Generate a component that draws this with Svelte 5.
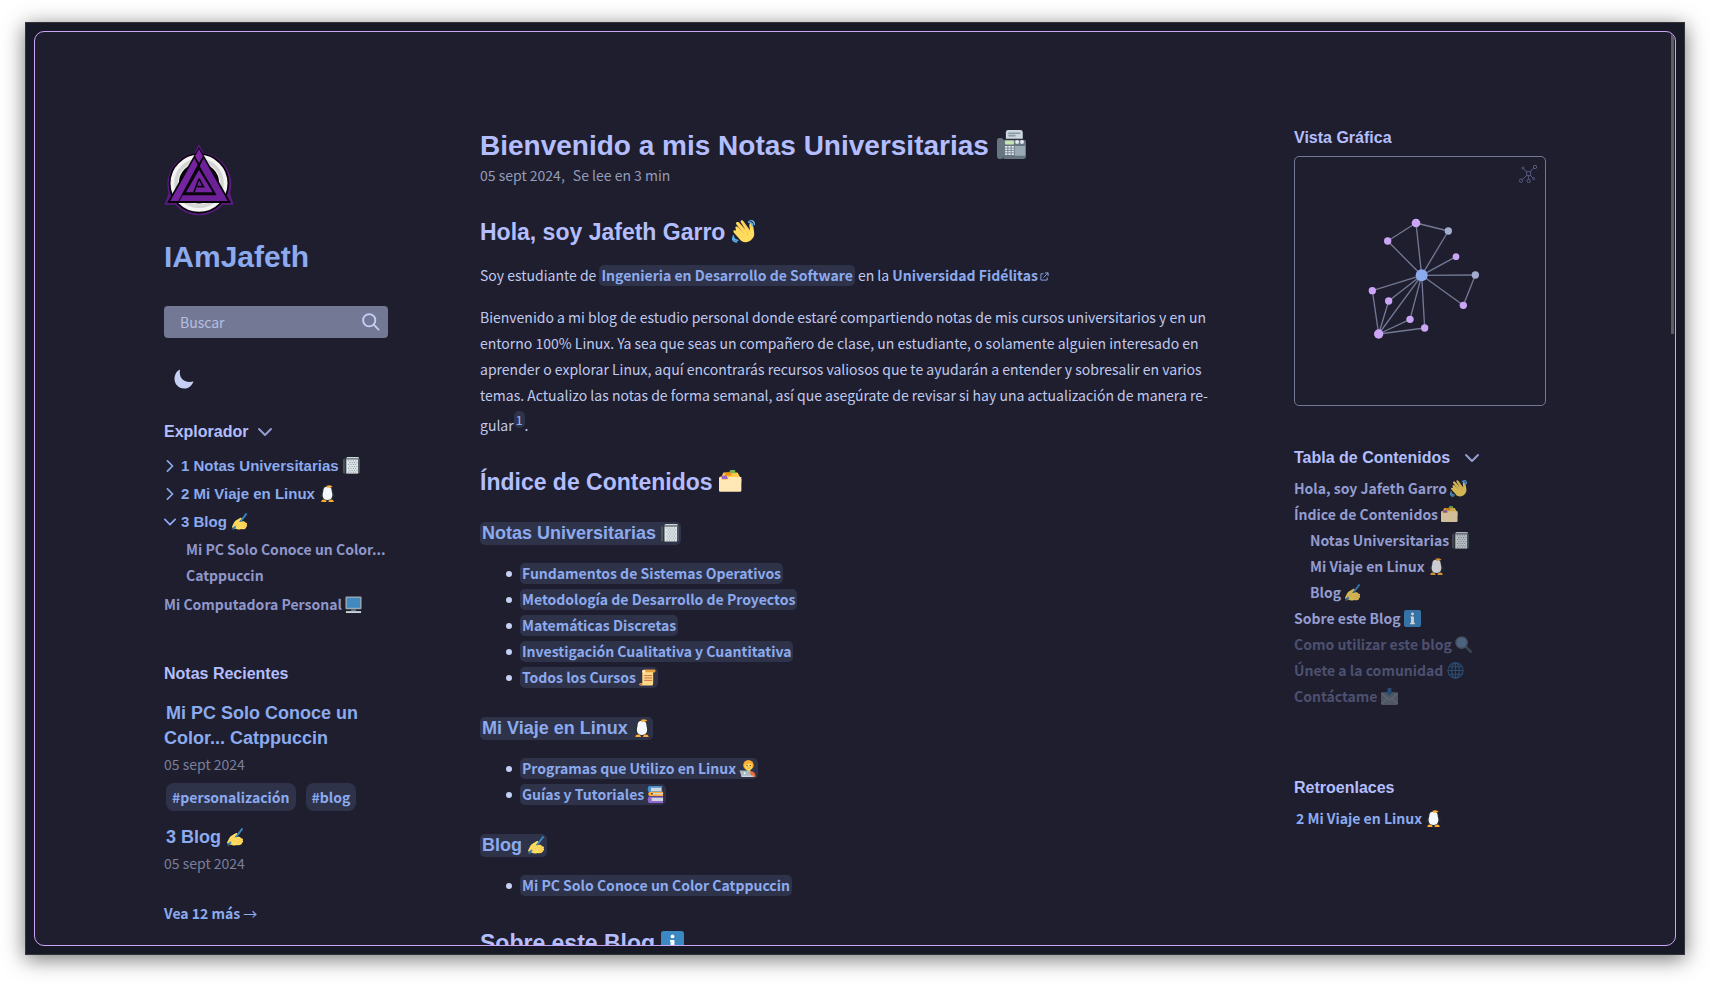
<script>
  const courses = [
    { text: 'Fundamentos de Sistemas Operativos' },
    { text: 'Metodología de Desarrollo de Proyectos' },
    { text: 'Matemáticas Discretas' },
    { text: 'Investigación Cualitativa y Cuantitativa' },
    { text: 'Todos los Cursos', icon: 'scroll' }
  ];
  const linux = [
    { text: 'Programas que Utilizo en Linux', icon: 'coder' },
    { text: 'Guías y Tutoriales', icon: 'books' }
  ];
  const toc = [
    { text: 'Hola, soy Jafeth Garro', icon: 'wave' },
    { text: 'Índice de Contenidos', icon: 'dividers' },
    { text: 'Notas Universitarias', icon: 'notebook', sub: true },
    { text: 'Mi Viaje en Linux', icon: 'penguin', sub: true },
    { text: 'Blog', icon: 'writing', sub: true },
    { text: 'Sobre este Blog', icon: 'info' },
    { text: 'Como utilizar este blog', icon: 'lens', dim: true },
    { text: 'Únete a la comunidad', icon: 'globe', dim: true },
    { text: 'Contáctame', icon: 'mail', dim: true }
  ];
  const hub = { x: 424, y: 497 };
  const nodes = [
    { x: 407, y: 340, r: 13 },
    { x: 322, y: 394, r: 11 },
    { x: 504, y: 364, r: 11, grey: true },
    { x: 527, y: 441, r: 10 },
    { x: 585, y: 496, r: 11, grey: true },
    { x: 549, y: 587, r: 11 },
    { x: 276, y: 543, r: 11 },
    { x: 325, y: 574, r: 11 },
    { x: 389, y: 629, r: 11 },
    { x: 433, y: 655, r: 11 },
    { x: 295, y: 673, r: 14 }
  ];
  const links = [[0, 1], [0, 2], [4, 5], [6, 10], [7, 10], [8, 10], [9, 10]];
  const keys = [0, 1, 2, 3];
  const dots = Array.from({ length: 28 }, (_, i) => {
    const row = Math.floor(i / 4);
    return { x: 12 + (i % 4) * 5 + (row % 2) * 2.5, y: 8 + row * 4 };
  });
</script>

{#snippet chevron(dir)}
  <svg class="chevron {dir}" viewBox="0 0 14 8" aria-hidden="true"><path d="M1 1l6 6 6-6" /></svg>
{/snippet}

{#snippet emoji(name)}
  <svg class="emoji" viewBox="0 0 36 36" aria-hidden="true">
    {#if name === 'fax'}
      <path fill="#66757f" d="M3 10h2a3 3 0 0 1 3 3v20a3 3 0 0 1-3 3H3a3 3 0 0 1-3-3V13a3 3 0 0 1 3-3zM8 12h25a3 3 0 0 1 3 3v18a3 3 0 0 1-3 3H8z" />
      <path fill="#ccd6dd" d="M14 0h15a3 3 0 0 1 3 3v8H11V3a3 3 0 0 1 3-3z" />
      <path fill="none" stroke="#8899a6" stroke-width="2" d="M14 4h15M14 7h9" />
      <rect fill="#c6e5b3" x="10" y="13" width="11" height="5" rx="1" />
      <circle fill="#e1e8ed" cx="25" cy="15" r="2.500" /><circle fill="#e1e8ed" cx="31" cy="15" r="2.500" />
      <path fill="#9aaab4" d="M22 20h13v12H22z" />
      {#each keys as k}<path stroke="#e1e8ed" stroke-width="2" stroke-dasharray="3 1" d="M10 {21 + k * 3}h11" />{/each}
    {:else if name === 'wave'}
      <path fill="#ffdc5d" d="M6 14c-2-2 0-5 3-3l7 7-9-11c-2-3 1-5 4-3l10 11-7-11c-2-3 2-5 4-2l10 14c0-5-2-8 0-11 2-3 5 0 5 3 1 10 4 15-1 21-6 8-16 7-20 1L3 20c-2-3 0-5 3-3z" />
      <path fill="none" stroke="#f5b54f" stroke-width="1" d="M9 11l10 10M11 5l11 13M18 4l8 11M28 16c-4 2-5 5-3 9" />
      <path fill="none" stroke="#5dadec" stroke-width="2.500" d="M25 3c4 0 7 3 7 7M27 0c5 0 9 4 8 8M2 24c0 5 3 8 8 8M0 27c1 5 4 8 8 7" />
    {:else if name === 'dividers'}
      <path fill="#ffcc4d" d="M4 10l3-6h22l4 7v8H3z" />
      <path fill="#77b255" d="M16 3l2-3h7l1 5h-9z" />
      <path fill="#f4900c" d="M9 6l2-2h8l1 5H9z" />
      <path fill="#ffac33" d="M2 10h10l3 4h20v6H2z" />
      <path fill="#9266cc" d="M4 9h8l2 5H4z" />
      <path fill="#ffe8b6" d="M1 11h3v4h9l3-4h19v21a2 2 0 0 1-2 2H2a2 2 0 0 1-2-2V12z" />
    {:else if name === 'notebook'}
      <rect fill="#31373d" x="1" y="2" width="34" height="34" rx="3" />
      <path fill="#ccd6dd" d="M9 0h22a3 3 0 0 1 3 3H6z" />
      <rect fill="#dfe7ea" x="7" y="5" width="25" height="30" />
      {#each dots as d}<circle fill="#7c8b94" cx={d.x} cy={d.y} r="1.200" />{/each}
      <path stroke="#66757f" stroke-width="2" d="M2 5v29M34 4v30" />
    {:else if name === 'penguin'}
      <path fill="#292f33" d="M18 1c9 0 10 7 12 15l4 9c-1 2-3 0-4-1-1 6-4 10-12 10S7 31 6 24c-1 1-3 3-4 1l4-9C8 8 9 1 18 1z" />
      <path fill="#f5f8fa" d="M18 5c6-3 9 2 9 9 3 9 1 18-9 18S6 23 9 14c0-7 3-12 9-9z" />
      <path fill="#ffac33" d="M15 2q10-4 14 2l-10 2zM5 35c0-4 6-6 10-2l1 3H5zM31 35c0-4-6-6-10-2l-1 3h11z" />
    {:else if name === 'writing'}
      <path fill="#ffdc5d" d="M2 29c3-5 4-10 8-13l10-6c3-1 4 2 2 4l-5 5c6-2 12-2 14 2 3-1 4 2 2 4 2 1 1 4-1 5 1 3-6 6-11 4-4 2-8 1-12-1l-4 2z" />
      <path fill="none" stroke="#f5b54f" stroke-width="1" d="M17 19l-5 4M31 21l-10 3M33 25l-11 3M32 29l-9 3M10 28c3-4 8-4 9 0" />
      <path stroke="#3b88c3" stroke-width="4" d="M33 1L20 18M10 28l-5 5" />
      <path fill="#226699" d="M6 30l-5 6 7-3z" />
    {:else if name === 'monitor'}
      <rect fill="#99aab5" x="1" y="1" width="34" height="27" rx="2" />
      <path fill="#4289c1" d="M4 4h28v21H4z" />
      <path fill="#66757f" d="M13 28h10v4H13z" />
      <path fill="#ccd6dd" d="M2 32h32v4H2z" />
    {:else if name === 'scroll'}
      <path fill="#ffd983" d="M9 2h24v5h-3v23c0 3-1 5-4 5H3c-3 0-3-5 0-5h4V6z" />
      <path fill="#e39f3d" d="M10 1h22a3 3 0 0 1 0 6H12z" />
      <circle fill="#ffe8b6" cx="10" cy="5" r="3.500" /><circle fill="#c1694f" cx="4" cy="33" r="2.500" />
      <path stroke="#c1694f" stroke-width="2" d="M11 14h17M11 19h17M11 24h17" />
    {:else if name === 'coder'}
      <path fill="#ef6c3a" d="M17 26c9-5 18-1 18 10H15z" />
      <circle fill="#ffac33" cx="20" cy="11" r="11" />
      <path fill="#ffdc5d" d="M12 10c5 0 9-2 11-4 1 3 4 3 5 5 0 7-4 11-8 11s-8-5-8-12zM17 20h7v7h-7z" />
      <circle fill="#662113" cx="17" cy="12" r="1.300" /><circle fill="#662113" cx="24" cy="12" r="1.300" />
      <path stroke="#c1694f" stroke-width="1.500" d="M18 17h5" />
      <path fill="#aab8c2" d="M1 22h21l4 12H5z" /><path fill="#ccd6dd" d="M5 33h25v3H5z" />
      <circle fill="#f5f8fa" cx="12" cy="28" r="2" />
    {:else if name === 'books'}
      <path fill="#3b94d9" d="M4 0h28v3H8v7h24v3H4q-5-6 0-13z" />
      <path fill="#ccd6dd" d="M8 3h23v8H8zM12 14h22v6H12zM9 24h25v9H9z" />
      <path fill="#ffac33" d="M5 12h29v3H9v3h25v3H5q-5-4 0-9z" />
      <path fill="#9266cc" d="M4 22h30v3H9v7h25v4H4q-5-7 0-14z" />
    {:else if name === 'info'}
      <rect fill="#3b88c3" width="36" height="36" rx="4" />
      <path fill="#fff" d="M14 14h7v13h2v3H13v-3h2V17h-1z" /><circle fill="#fff" cx="18" cy="8.500" r="3" />
    {:else if name === 'lens'}
      <path stroke="#66757f" stroke-width="6" stroke-linecap="round" d="M24 24l9 9" />
      <circle fill="#8ccaf7" stroke="#8899a6" stroke-width="3" cx="14" cy="14" r="12" />
    {:else if name === 'globe'}
      <g fill="none" stroke="#3b94d9" stroke-width="2.500"><circle cx="18" cy="18" r="16" /><ellipse cx="18" cy="18" rx="8" ry="16" /><path d="M18 2v32M2 18h32M5 10h26M5 26h26" /></g>
    {:else}
      <rect fill="#99aab5" y="9" width="36" height="27" rx="3" />
      <path fill="none" stroke="#e1e8ed" stroke-width="2" d="M1 34l12-12M35 34L23 22M1 11l17 15 17-15" />
      <path fill="#3b94d9" d="M14 0h8v8h5l-9 9-9-9h5z" />
    {/if}
  </svg>
{/snippet}

<div class="window">
  <div class="page" lang="es">
    <div class="columns">
      <aside class="side-left">
        <svg class="logo" viewBox="0 0 210 216" aria-hidden="true">
          <path d="M105 1L119 27A95 95 0 0 1 198 148L209 182H176A95 95 0 0 1 34 182H1L14 148A95 95 0 0 1 91 27Z" fill="#5b1a80" />
          <circle cx="105" cy="118" r="91" fill="#08050b" />
          <circle cx="105" cy="118" r="73" fill="none" stroke="#f4f4f4" stroke-width="25" />
          <circle cx="105" cy="118" r="69" fill="none" stroke="#d5d5d5" stroke-width="11" />
          <path d="M105 9L201 177H9Z" fill="#08050b" />
          <path d="M105 15L117 37L105 57L93 37Z" fill="#7b27a3" />
          <path d="M91 43L101 62L43 171H19Z" fill="#7424a0" />
          <path d="M119 43L191 171H46L56 154H158L107 67Z" fill="#6d2198" />
          <path d="M105 78L146 145H66Z" fill="#7424a0" />
          <path d="M105 104L90 145M105 104L118 128H100" fill="none" stroke="#08050b" stroke-width="5" />
        </svg>
        <a class="site" href="#inicio">IAmJafeth</a>
        <label class="search">
          <input type="search" placeholder="Buscar" aria-label="Buscar" />
          <svg viewBox="0 0 20 20" aria-hidden="true"><circle cx="8" cy="8" r="6.8" /><path d="M13 13l6 6" /></svg>
        </label>
        <button class="moon" aria-label="Modo oscuro">
          <svg viewBox="0 0 20 20"><path d="M6 0.5C4.500 9 10 14.500 19.500 12.500C17.500 18 13.500 19.600 10 19.500C4.500 19.300 0.500 15 0.500 10C0.500 6 2.500 2 6 0.500Z" /></svg>
        </button>
        <button class="head">Explorador {@render chevron('down')}</button>
        <nav class="explorer" aria-label="Explorador">
          <a class="folder" href="#notas">{@render chevron('closed')}<span>1 Notas Universitarias {@render emoji('notebook')}</span></a>
          <a class="folder" href="#linux">{@render chevron('closed')}<span>2 Mi Viaje en Linux {@render emoji('penguin')}</span></a>
          <a class="folder" href="#blog">{@render chevron('down')}<span>3 Blog {@render emoji('writing')}</span></a>
          <a class="file nested" href="#pc">Mi PC Solo Conoce un Color... Catppuccin</a>
          <a class="file" href="#mi-pc">Mi Computadora Personal {@render emoji('monitor')}</a>
        </nav>
        <section class="recent">
          <h3 class="label">Notas Recientes</h3>
          <h3 class="note"><a href="#pc">Mi PC Solo Conoce un Color... Catppuccin</a></h3>
          <p class="date">05 sept 2024</p>
          <div class="tags"><a href="#personalizacion">#personalización</a><a href="#tag-blog">#blog</a></div>
          <h3 class="note"><a href="#blog">3 Blog {@render emoji('writing')}</a></h3>
          <p class="date">05 sept 2024</p>
          <a class="more" href="#mas">Vea 12 más <span class="arrow">→</span></a>
        </section>
      </aside>

      <article>
        <h1>Bienvenido a mis Notas Universitarias {@render emoji('fax')}</h1>
        <p class="meta"><span>05 sept 2024,</span><span>Se lee en 3 min</span></p>
        <h2>Hola, soy Jafeth Garro {@render emoji('wave')}</h2>
        <p>
          Soy estudiante de <a class="chip" href="#ingenieria">Ingenieria en Desarrollo de Software</a> en la
          <a class="external" href="#fidelitas">Universidad Fidélitas<svg viewBox="0 0 10 10" aria-hidden="true"><path d="M4 2H1v7h7V6M5.500 1H9v3.500M9 1L4 6" /></svg></a>
        </p>
        <p>
          Bienvenido a mi blog de estudio personal donde estaré compartiendo notas de mis cursos
          universitarios y en un entorno 100% Linux. Ya sea que seas un compañero de clase, un estudiante,
          o solamente alguien interesado en aprender o explorar Linux, aquí encontrarás recursos valiosos
          que te ayudarán a entender y sobresalir en varios temas. Actualizo las notas de forma semanal,
          así que asegúrate de revisar si hay una actualización de manera re&shy;gular<sup><a href="#nota-1">1</a></sup>.
        </p>
        <h2>Índice de Contenidos {@render emoji('dividers')}</h2>
        <h3><a class="chip" href="#notas">Notas Universitarias {@render emoji('notebook')}</a></h3>
        <ul>
          {#each courses as item}
            <li><a class="chip" href="#curso">{item.text}{#if item.icon}{' '}{@render emoji(item.icon)}{/if}</a></li>
          {/each}
        </ul>
        <h3><a class="chip" href="#linux">Mi Viaje en Linux {@render emoji('penguin')}</a></h3>
        <ul>
          {#each linux as item}
            <li><a class="chip" href="#guia">{item.text}{' '}{@render emoji(item.icon)}</a></li>
          {/each}
        </ul>
        <h3><a class="chip" href="#blog">Blog {@render emoji('writing')}</a></h3>
        <ul>
          <li><a class="chip" href="#pc">Mi PC Solo Conoce un Color Catppuccin</a></li>
        </ul>
        <h2>Sobre este Blog {@render emoji('info')}</h2>
      </article>

      <aside class="side-right">
        <h3 class="label">Vista Gráfica</h3>
        <div class="graph">
          <svg viewBox="44 142 750 744" aria-label="Grafo de notas" role="img">
            <g class="edges">
              {#each nodes as n}<line x1={hub.x} y1={hub.y} x2={n.x} y2={n.y} />{/each}
              {#each links as [a, b]}<line x1={nodes[a].x} y1={nodes[a].y} x2={nodes[b].x} y2={nodes[b].y} />{/each}
            </g>
            {#each nodes as n}<circle class="node" class:grey={n.grey} cx={n.x} cy={n.y} r={n.r} />{/each}
            <circle class="hub" cx={hub.x} cy={hub.y} r="18" />
          </svg>
          <button aria-label="Grafo global">
            <svg viewBox="0 0 54 54"><path d="M23 20h12v12H23zM34 20l10-11M24 21L14 12M24 31L9 44M29 32v11M34 31l8 8" /><circle cx="48" cy="6" r="5" /><circle cx="12" cy="9" r="3" /><circle cx="6" cy="47" r="5" /><circle cx="29" cy="48" r="5" /><circle cx="44" cy="41" r="3" /></svg>
          </button>
        </div>
        <button class="head wide">Tabla de Contenidos {@render chevron('down')}</button>
        <nav class="toc" aria-label="Tabla de Contenidos">
          {#each toc as t}
            <a class:sub={t.sub} class:dim={t.dim} href="#seccion">{t.text}{' '}{@render emoji(t.icon)}</a>
          {/each}
        </nav>
        <section class="backlinks">
          <h3 class="label">Retroenlaces</h3>
          <a href="#linux">2 Mi Viaje en Linux {@render emoji('penguin')}</a>
        </section>
      </aside>
    </div>
    <div class="thumb"></div>
  </div>
</div>

<style>
  :global(body) {
    background: #fff;
  }
  :global(#app) {
    display: flow-root;
  }
  .window {
    --body: "Noto Sans CJK SC", "Noto Sans", sans-serif;
    --head: "Liberation Sans", Arial, sans-serif;
    box-sizing: border-box;
    height: calc(100vh - 51px);
    margin: 22px 25px 29px;
    padding: 8px;
    border: 1px solid #333338;
    background: #181926;
    box-shadow: 0 4px 20px rgba(0, 0, 0, 0.55);
    font: 14px/26px var(--body);
    color: #c0c9ee;
  }
  .page {
    position: relative;
    box-sizing: border-box;
    height: 100%;
    overflow: hidden;
    border: 1px solid #cba6f7;
    border-radius: 10px;
    background: #1e1e2e;
  }
  .thumb {
    position: absolute;
    top: 2px;
    right: 1px;
    width: 3px;
    height: 300px;
    background: #5e5e62;
  }
  .columns {
    display: grid;
    grid-template-columns: 224px minmax(0, 1fr) 252px;
    gap: 64px;
    max-width: 1382px;
    margin: 0 auto;
  }
  h1, h2, h3, p, ul {
    margin: 0;
  }
  h1, h2, h3, .head, .site, .folder {
    font-family: var(--head);
    font-weight: 700;
    color: #b4befe;
  }
  a {
    color: #8caaee;
    text-decoration: none;
    font-weight: 700;
  }
  button {
    border: 0;
    padding: 0;
    background: none;
    cursor: pointer;
  }
  svg {
    display: block;
  }
  .emoji {
    display: inline-block;
    width: 17px;
    height: 17px;
    vertical-align: -3px;
  }
  h1 .emoji {
    width: 29px;
    height: 29px;
    vertical-align: -4px;
  }
  h2 .emoji {
    width: 23px;
    height: 23px;
    vertical-align: -3px;
  }
  h3 .emoji {
    width: 18px;
    height: 18px;
  }
  .side-left {
    display: flex;
    flex-direction: column;
    align-items: stretch;
    padding-top: 112px;
  }
  .logo {
    width: 70px;
    height: 72px;
  }
  .site {
    margin-top: 22px;
    font-size: 30px;
    line-height: 38px;
    color: #8caaee;
  }
  .search {
    display: flex;
    align-items: center;
    box-sizing: border-box;
    height: 32px;
    margin-top: 30px;
    padding: 0 8px 0 16px;
    border-radius: 4px;
    background: #737994;
  }
  input {
    flex: 1;
    min-width: 0;
    padding: 0;
    border: 0;
    outline: 0;
    background: none;
    font: 14px/26px var(--body);
    color: #c6d0f5;
  }
  input::placeholder {
    color: #b5bfe2;
  }
  .search svg {
    width: 18px;
    height: 18px;
    overflow: visible;
    fill: none;
    stroke: #c6d0f5;
    stroke-width: 2;
  }
  .moon {
    align-self: flex-start;
    margin: 31px 10px 0;
  }
  .moon svg {
    width: 20px;
    height: 20px;
    fill: #c6d0f5;
  }
  .head {
    display: flex;
    align-items: center;
    gap: 10px;
    margin-top: 30px;
    font-size: 16px;
    line-height: 26px;
  }
  .head.wide {
    gap: 15px;
    margin-top: 39px;
  }
  .chevron {
    width: 14px;
    height: 8px;
    overflow: visible;
    fill: none;
    stroke: #949cd0;
    stroke-width: 2;
    stroke-linecap: round;
    stroke-linejoin: round;
  }
  .folder .chevron {
    width: 12px;
    margin-right: 5px;
    stroke: #8caaee;
  }
  .chevron.closed {
    transform: rotate(-90deg);
  }
  .explorer {
    display: flex;
    flex-direction: column;
    margin-top: 7px;
  }
  .folder {
    display: flex;
    align-items: center;
    height: 28px;
    font-size: 15px;
    color: #8caaee;
  }
  .file {
    margin-top: 3px;
    color: #8f97cb;
    white-space: nowrap;
  }
  .file.nested {
    margin: 0 0 0 22px;
    white-space: normal;
  }
  .recent {
    margin-top: 44px;
  }
  .label {
    font-size: 16px;
    line-height: 26px;
  }
  .note {
    margin-top: 14px;
    font-size: 18px;
    line-height: 25px;
  }
  .note a {
    padding-left: 2px;
  }
  .date {
    color: #7a7f9c;
  }
  .tags {
    display: flex;
    gap: 10px;
    margin: 6px 2px 0;
  }
  .tags a {
    padding: 1px 6px;
    border-radius: 8px;
    background: #2f334a;
  }
  .more {
    display: block;
    margin-top: 24px;
  }
  .arrow {
    font-weight: 400;
  }
  article {
    padding: 98px 4px 0 28px;
    hyphenate-character: "-";
  }
  h1 {
    font-size: 28px;
    line-height: 32px;
  }
  .meta {
    display: flex;
    gap: 8px;
    color: #949cb8;
  }
  h2 {
    margin: 28px 0 14px;
    font-size: 23px;
    line-height: 32px;
  }
  article > p + p:not(.meta) {
    margin-top: 16px;
  }
  article > h3 {
    margin-top: 22px;
    font-size: 18px;
    line-height: 26px;
  }
  .chip {
    display: inline-block;
    padding: 0 2px;
    border-radius: 5px;
    background: #2f334a;
    line-height: 21px;
  }
  h3 .chip {
    line-height: 23px;
  }
  .external svg {
    display: inline-block;
    width: 9px;
    height: 9px;
    margin-left: 2px;
    fill: none;
    stroke: #8caaee;
  }
  sup {
    font-size: 12px;
    line-height: 24px;
  }
  sup a {
    padding: 0 2px;
    border-radius: 5px;
    background: #2f334a;
    font-weight: 500;
  }
  ul {
    margin: 15px 0 24px;
    padding-left: 26px;
    list-style: none;
  }
  li {
    display: flex;
    align-items: center;
    gap: 8px;
    height: 26px;
  }
  li::before {
    content: "";
    width: 6px;
    height: 6px;
    border-radius: 50%;
    background: #c6d0f5;
  }
  .side-right {
    padding-top: 93px;
  }
  .graph {
    position: relative;
    margin-top: 5px;
    border: 1px solid #737994;
    border-radius: 5px;
  }
  .edges {
    stroke: #737994;
    stroke-width: 4;
  }
  .node {
    fill: #cba6f7;
  }
  .grey {
    fill: #a5adce;
  }
  .hub {
    fill: #8caaee;
  }
  .graph button {
    position: absolute;
    top: 8px;
    right: 8px;
  }
  .graph button svg {
    width: 18px;
    height: 18px;
    fill: none;
    stroke: #565c80;
    stroke-width: 3;
  }
  .toc {
    display: flex;
    flex-direction: column;
    margin-top: 4px;
  }
  .toc a {
    color: #949cd0;
  }
  .toc .emoji {
    opacity: 0.8;
  }
  .toc .sub {
    padding-left: 16px;
  }
  .toc .dim {
    opacity: 0.4;
  }
  .toc .dim .emoji {
    opacity: 1;
  }
  .backlinks {
    margin-top: 66px;
  }
  .backlinks a {
    display: block;
    margin-top: 4px;
    padding-left: 2px;
  }
</style>
